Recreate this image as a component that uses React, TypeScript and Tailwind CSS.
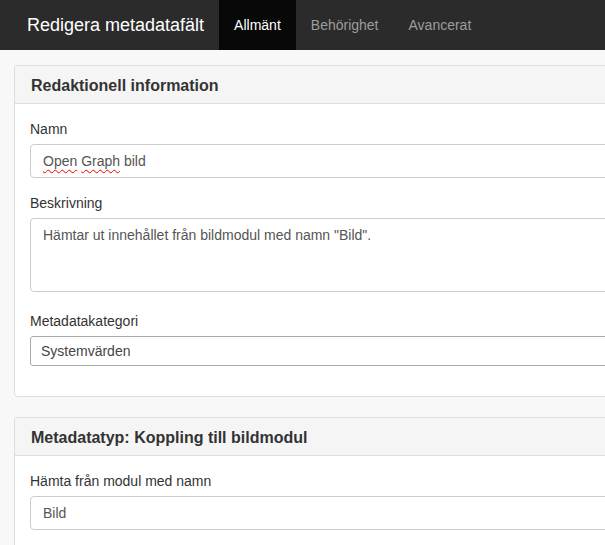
import React from "react";

const font = { fontFamily: '"Liberation Sans", Arial, sans-serif' };

function Label({ children }: { children: React.ReactNode }) {
  return <div className="h-[20px] leading-[20px] text-[14px] text-[#333] mb-[5px]">{children}</div>;
}

export default function App() {
  return (
    <div className="w-[605px] h-[545px] overflow-hidden bg-[#f8f8f8]" style={font}>
      <div className="h-[50px] bg-[#2b2b2b] flex">
        <div className="pl-[27px] pr-[15px] h-[50px] leading-[20px] py-[15px] text-[18px] text-white whitespace-nowrap">
          Redigera metadatafält
        </div>
        <div className="flex">
          <div className="px-[15px] py-[15px] leading-[20px] text-[14px] text-white bg-[#080808] whitespace-nowrap">Allmänt</div>
          <div className="px-[15px] py-[15px] leading-[20px] text-[14px] text-[#9d9d9d] whitespace-nowrap">Behörighet</div>
          <div className="px-[15px] py-[15px] leading-[20px] text-[14px] text-[#9d9d9d] whitespace-nowrap">Avancerat</div>
        </div>
      </div>

      <div className="pt-[15px] pl-[14px]">
        <div className="w-[640px] border border-[#ddd] rounded-[4px] bg-white mb-[20px]">
          <div className="h-[38px] bg-[#f5f5f5] border-b border-[#ddd] rounded-t-[4px] px-[16px] pt-[10px] leading-[20px] text-[16px] font-bold text-[#333]">
            Redaktionell information
          </div>
          <div className="p-[15px]">
            <div className="mb-[15px]">
              <Label>Namn</Label>
              <div className="h-[34px] border border-[#ccc] rounded-[4px] bg-white px-[12px] py-[6px] leading-[20px] text-[14px] text-[#555]">
                <span className="underline decoration-wavy decoration-[#e00] decoration-1 underline-offset-[3px]">Open</span>{" "}
                <span className="underline decoration-wavy decoration-[#e00] decoration-1 underline-offset-[3px]">Graph</span> bild
              </div>
            </div>
            <div className="mb-[19px]">
              <Label>Beskrivning</Label>
              <div className="h-[74px] border border-[#ccc] rounded-[4px] bg-white px-[12px] py-[6px] leading-[20px] text-[14px] text-[#555]">
                Hämtar ut innehållet från bildmodul med namn "Bild".
              </div>
            </div>
            <div className="mb-[15px]">
              <Label>Metadatakategori</Label>
              <div className="h-[30px] border border-[#a9a9a9] rounded-[3px] bg-white px-[10px] py-[4px] leading-[20px] text-[14px] text-[#444]">
                Systemvärden
              </div>
            </div>
          </div>
        </div>

        <div className="w-[640px] border border-[#ddd] rounded-[4px] bg-white">
          <div className="h-[38px] bg-[#f5f5f5] border-b border-[#ddd] rounded-t-[4px] px-[16px] pt-[10px] leading-[20px] text-[16px] font-bold text-[#333]">
            Metadatatyp: Koppling till bildmodul
          </div>
          <div className="p-[15px]">
            <div className="mb-[15px]">
              <Label>Hämta från modul med namn</Label>
              <div className="h-[34px] border border-[#ccc] rounded-[4px] bg-white px-[12px] py-[6px] leading-[20px] text-[14px] text-[#555]">
                Bild
              </div>
            </div>
          </div>
        </div>
      </div>
    </div>
  );
}
